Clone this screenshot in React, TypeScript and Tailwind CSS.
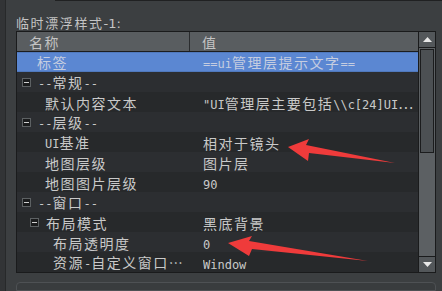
import React from "react";

const CJK = /([\u2026\u3000-\u9fff\uff00-\uffef]+)/;

function T({ s }: { s: string }) {
  const parts = s.split(CJK).filter((p) => p.length > 0);
  return (
    <>
      {parts.map((p, i) =>
        CJK.test(p) ? (
          <span key={i} className="font-['Noto_Sans_CJK_SC',sans-serif] text-[14px] tracking-[1.5px]">
            {p}
          </span>
        ) : (
          <span key={i} className="font-['DejaVu_Sans_Mono',monospace] text-[12px]">
            {p}
          </span>
        )
      )}
    </>
  );
}

type Row = {
  name: string;
  value?: string;
  indent: string;
  box?: boolean;
  boxPad?: string;
  selected?: boolean;
  dark?: boolean;
};

const rows: Row[] = [
  { name: "标签", value: "==ui管理层提示文字==", indent: "pl-[20px]", selected: true },
  { name: "--常规--", indent: "pl-[21px]", box: true, boxPad: "pl-[5px]", dark: true },
  { name: "默认内容文本", value: "\"UI管理层主要包括\\\\c[24]UI…", indent: "pl-[28px]" },
  { name: "--层级--", indent: "pl-[21px]", box: true, boxPad: "pl-[5px]", dark: true },
  { name: "UI基准", value: "相对于镜头", indent: "pl-[28px]" },
  { name: "地图层级", value: "图片层", indent: "pl-[28px]", dark: true },
  { name: "地图图片层级", value: "90", indent: "pl-[28px]" },
  { name: "--窗口--", indent: "pl-[21px]", box: true, boxPad: "pl-[5px]", dark: true },
  { name: "布局模式", value: "黑底背景", indent: "pl-[28px]", box: true, boxPad: "pl-[13px]" },
  { name: "布局透明度", value: "0", indent: "pl-[36px]", dark: true },
  { name: "资源-自定义窗口…", value: "Window", indent: "pl-[36px]" },
];

function MinusBox() {
  return (
    <span className="w-[9px] h-[9px] bg-[#1b1c1d] border border-[#5d6163] flex items-center justify-center shrink-0">
      <span className="w-[5px] h-[1px] bg-[#d0d0d0]" />
    </span>
  );
}

export default function App() {
  return (
    <div className="relative w-[442px] h-[291px] bg-[#3c3f41] overflow-hidden flex text-[#c9c9c9]">
      <div className="w-[6px] h-full bg-[#323436] border-r border-[#27292a] shrink-0" />
      <div className="flex-1 flex flex-col">
        <div className="ml-[49px] h-[2px] border-b border-[#202122] bg-[#2b2d2f] flex">
          <div className="w-[50px] border-r border-[#202122]" />
        </div>
        <div className="pl-[10px] h-[30px] pt-[11px] leading-[20px] whitespace-nowrap text-[#c4c4c4]">
          <span className="font-['Noto_Sans_CJK_SC',sans-serif] text-[13px] tracking-[1.6px]">临时漂浮样式</span>
          <span className="font-['DejaVu_Sans',sans-serif] text-[13px]">-1:</span>
        </div>
        <div className="ml-[10px] w-[420px] h-[242px] border border-[#1a1b1c] flex">
          <div className="w-[402px] flex flex-col bg-[#2a2c2e] overflow-hidden">
            <div className="h-[20px] bg-[#595d60] border-b border-[#1c1d1e] flex shrink-0 leading-[20px] text-[#c4c4c4]">
              <div className="w-[173px] border-r border-[#2a2c2e] pl-[12px] whitespace-nowrap">
                <T s="名称" />
              </div>
              <div className="pl-[12px]">
                <T s="值" />
              </div>
            </div>
            {rows.map((r, i) => (
              <div
                key={i}
                className={
                  "h-[20px] flex shrink-0 whitespace-nowrap " +
                  (r.selected
                    ? "bg-[#5b87d2] text-[#c5cde0] border-y border-[#5079bd] leading-[18px]"
                    : r.dark
                    ? "bg-[#2c2e31] leading-[20px] pt-[1px]"
                    : "bg-[#27292b] leading-[20px] pt-[1px]")
                }
              >
                <div className={"w-[186px] flex items-center gap-[7px] " + (r.box ? r.boxPad : r.indent)}>
                  {r.box && <MinusBox />}
                  <span>
                    <T s={r.name} />
                  </span>
                </div>
                <div className="flex-1 overflow-hidden">
                  {r.value && <T s={r.value} />}
                </div>
              </div>
            ))}
          </div>
          <div className="w-[17px] flex flex-col border-l border-[#1a1b1c] bg-[#3c3f41]">
            <div className="h-[16px] flex items-center justify-center bg-[#53575a] border-b border-[#1a1b1c]">
              <svg width="9" height="5" viewBox="0 0 9 5">
                <polygon points="4.5,0 9,5 0,5" fill="#e8e8e8" />
              </svg>
            </div>
            <div className="flex-1 bg-[#5c6063] p-[1px] pt-[1px]">
              <div className="h-[104px] bg-[#4c5053] border border-[#1b1c1d]" />
            </div>
            <div className="h-[16px] flex items-center justify-center bg-[#53575a] border-t border-[#1a1b1c]">
              <svg width="9" height="5" viewBox="0 0 9 5">
                <polygon points="0,0 9,0 4.5,5" fill="#e8e8e8" />
              </svg>
            </div>
          </div>
        </div>
        <div className="ml-[10px] mt-[9px] w-[420px] h-[20px] rounded-t-[4px] border border-[#4e5154] bg-[#393c3e]" />
      </div>
      <svg className="absolute left-0 top-0 pointer-events-none" width="442" height="291" viewBox="0 0 442 291">
        <polygon points="288,147 309,139 306,145 395,163 309,153 308,161" fill="#ef3b3b" />
        <polygon points="228,243 252,236 249,241 368,261 252,249 249,256" fill="#ef3b3b" />
      </svg>
    </div>
  );
}
